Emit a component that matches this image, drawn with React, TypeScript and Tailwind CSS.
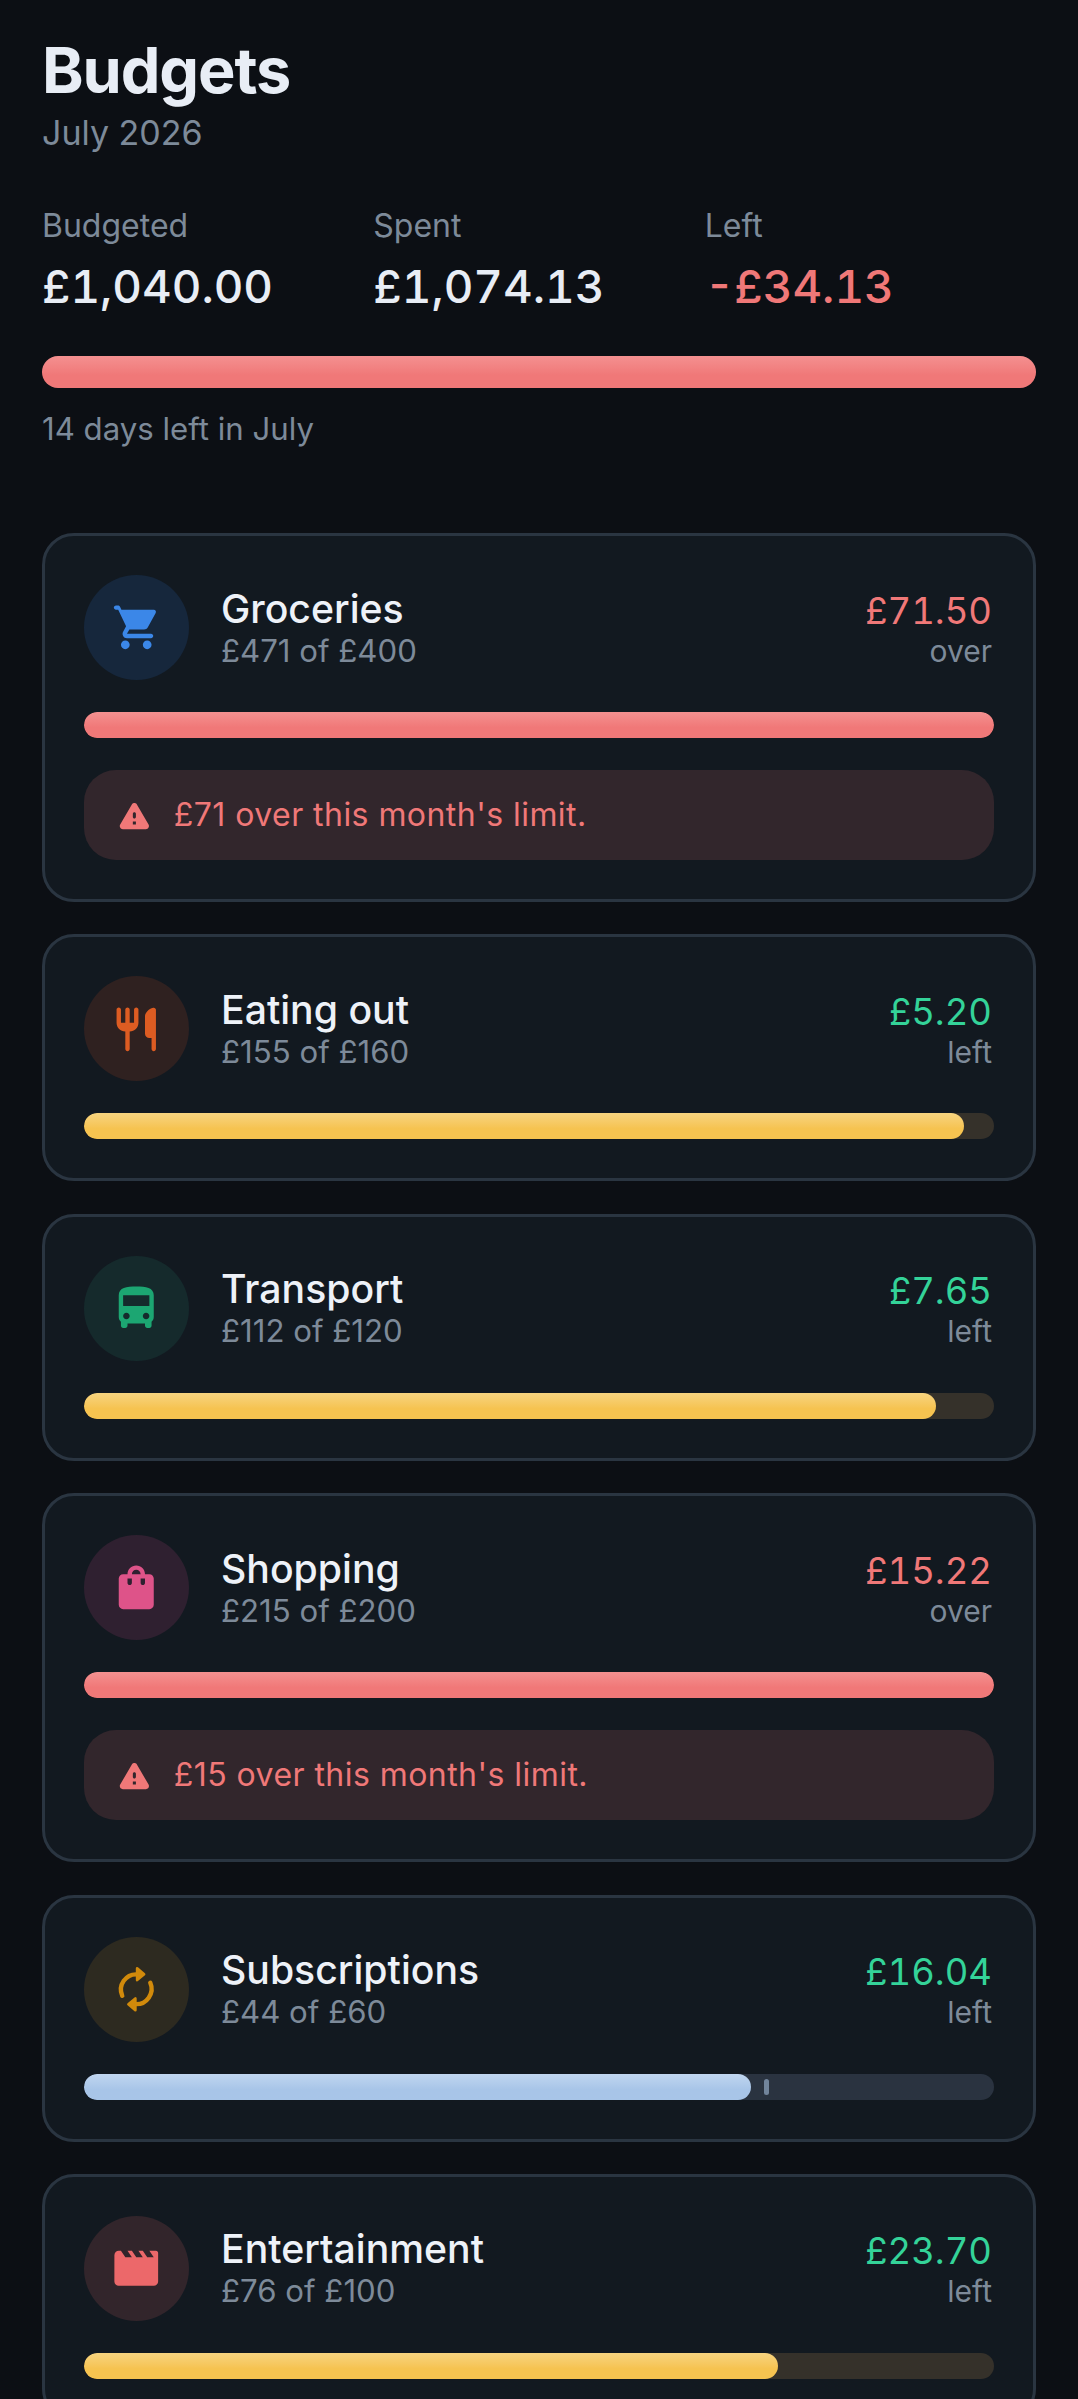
import type { ReactNode } from "react";

function Icon({ children, className }: { children: ReactNode; className: string }) {
  return (
    <svg viewBox="0 0 24 24" fill="currentColor" className={className}>
      {children}
    </svg>
  );
}

const icons: Record<string, ReactNode> = {
  cart: (
    <path d="M7 18c-1.1 0-1.99.9-1.99 2S5.9 22 7 22s2-.9 2-2-.9-2-2-2zm10 0c-1.1 0-1.99.9-1.99 2s.89 2 1.99 2 2-.9 2-2-.9-2-2-2zm-1.45-5c.75 0 1.41-.41 1.75-1.03l3.58-6.49c.37-.66-.11-1.48-.87-1.48H5.21l-.67-1.43c-.16-.35-.52-.57-.9-.57H2.75c-.55 0-1 .45-1 1s.45 1 1 1h1l3.6 7.59-1.35 2.44C5.27 15.37 6.23 17 7.75 17h11c.55 0 1-.45 1-1s-.45-1-1-1h-11l1.1-2h7.45z" />
  ),
  food: (
    <path d="M16 6v8c0 1.1.9 2 2 2h1v5c0 .55.45 1 1 1s1-.45 1-1V3.13c0-.65-.61-1.13-1.24-.98C17.6 2.68 16 4.51 16 6zm-5 3H9V3c0-.55-.45-1-1-1s-1 .45-1 1v6H5V3c0-.55-.45-1-1-1s-1 .45-1 1v6c0 2.21 1.79 4 4 4v8c0 .55.45 1 1 1s1-.45 1-1v-8c2.21 0 4-1.79 4-4V3c0-.55-.45-1-1-1s-1 .45-1 1v6z" />
  ),
  bus: (
    <path d="M4 16c0 .88.39 1.67 1 2.22V20c0 .55.45 1 1 1h1c.55 0 1-.45 1-1v-1h8v1c0 .55.45 1 1 1h1c.55 0 1-.45 1-1v-1.78c.61-.55 1-1.34 1-2.22V6c0-3.5-3.58-4-8-4s-8 .5-8 4v10zm3.5 1c-.83 0-1.5-.67-1.5-1.5S6.67 14 7.5 14s1.5.67 1.5 1.5S8.33 17 7.5 17zm9 0c-.83 0-1.5-.67-1.5-1.5s.67-1.5 1.5-1.5 1.5.67 1.5 1.5-.67 1.5-1.5 1.5zm1.5-6H6V6h12v5z" />
  ),
  bag: (
    <path d="M18 6h-2c0-2.21-1.79-4-4-4S8 3.79 8 6H6c-1.1 0-2 .9-2 2v12c0 1.1.9 2 2 2h12c1.1 0 2-.9 2-2V8c0-1.1-.9-2-2-2zm-8 4c0 .55-.45 1-1 1s-1-.45-1-1V8h2v2zm2-6c1.1 0 2 .9 2 2h-4c0-1.1.9-2 2-2zm4 6c0 .55-.45 1-1 1s-1-.45-1-1V8h2v2z" />
  ),
  sync: (
    <>
      <path d="M5.6 15A7 7 0 0 1 12.5 5.2" fill="none" stroke="currentColor" strokeWidth="2" strokeLinecap="round" />
      <path d="M12.4 2.4L15.6 5.1L12.4 7.8Z" stroke="currentColor" strokeWidth="1.2" strokeLinejoin="round" />
      <path d="M18.4 9A7 7 0 0 1 11.5 18.8" fill="none" stroke="currentColor" strokeWidth="2" strokeLinecap="round" />
      <path d="M11.6 21.6L8.4 18.9L11.6 16.2Z" stroke="currentColor" strokeWidth="1.2" strokeLinejoin="round" />
    </>
  ),
  movie: (
    <path d="M18 4l2 3h-3l-2-3h-2l2 3h-3l-2-3H8l2 3H7L5 4H4c-1.1 0-1.99.9-1.99 2L2 18c0 1.1.9 2 2 2h16c1.1 0 2-.9 2-2V5c0-.55-.45-1-1-1h-3z" />
  ),
};

const budgets = [
  { name: "Groceries", sub: "£471 of £400", amount: "£71.50", note: "over", icon: "cart", circle: "bg-[#16273c]", tint: "text-[#3b87e8]", fill: "w-full bg-gradient-to-b from-[#f49090] to-[#f07878] to-60%", track: "bg-[#3a2528]", warn: "£71 over this month's limit." },
  { name: "Eating out", sub: "£155 of £160", amount: "£5.20", note: "left", icon: "food", circle: "bg-[#2f2120]", tint: "text-[#dd5c22]", fill: "w-[96.75%] bg-gradient-to-b from-[#f7d47f] to-[#f6c350] to-60%", track: "bg-[#35312a]" },
  { name: "Transport", sub: "£112 of £120", amount: "£7.65", note: "left", icon: "bus", circle: "bg-[#152a2c]", tint: "text-[#1ca672]", fill: "w-[93.6%] bg-gradient-to-b from-[#f7d47f] to-[#f6c350] to-60%", track: "bg-[#35312a]" },
  { name: "Shopping", sub: "£215 of £200", amount: "£15.22", note: "over", icon: "bag", circle: "bg-[#2f2030]", tint: "text-[#de5389]", fill: "w-full bg-gradient-to-b from-[#f49090] to-[#f07878] to-60%", track: "bg-[#3a2528]", warn: "£15 over this month's limit." },
  { name: "Subscriptions", sub: "£44 of £60", amount: "£16.04", note: "left", icon: "sync", circle: "bg-[#2d2a20]", tint: "text-[#d18a0b]", fill: "w-[73.3%] bg-gradient-to-b from-[#c0d6f0] to-[#a8c5e8] to-60%", track: "bg-[#2a3340]", marker: true },
  { name: "Entertainment", sub: "£76 of £100", amount: "£23.70", note: "left", icon: "movie", circle: "bg-[#32252b]", tint: "text-[#ec686a]", fill: "w-[76.3%] bg-gradient-to-b from-[#f7d47f] to-[#f6c350] to-60%", track: "bg-[#35312a]" },
];

export default function App() {
  return (
    <div className="h-screen overflow-hidden bg-[#0c0f14] px-[42px] pt-[34px] font-['Inter',sans-serif] text-[#e8edf5]">
      <h1 className="text-[63px] font-bold leading-[72px] tracking-[-1.1px]">Budgets</h1>
      <p className="mt-[5px] text-[34px] leading-[44px] text-[#7d8a99]">July 2026</p>

      {/* Summary */}
      <div className="mt-[49px] grid grid-cols-3">
        {[
          { label: "Budgeted", value: "£1,040.00", color: "text-[#e8edf5]" },
          { label: "Spent", value: "£1,074.13", color: "text-[#e8edf5]" },
          { label: "Left", value: "-£34.13", color: "text-[#f07878]" },
        ].map((s) => (
          <div key={s.label}>
            <p className="text-[32px] leading-[44px] text-[#7d8a99]">{s.label}</p>
            <p className={`mt-[9px] text-[45.8px] font-[450] leading-[60px] tabular-nums ${s.color}`}>{s.value}</p>
          </div>
        ))}
      </div>

      <div className="mt-[39px] h-[32px] rounded-full bg-gradient-to-b from-[#f49090] to-[#f07878] to-60%" />
      <p className="mt-[20px] text-[31.2px] leading-[42px] text-[#7d8a99]">14 days left in July</p>

      {/* Budget cards */}
      <div className="mt-[83px] flex flex-col gap-[32.4px]">
        {budgets.map((b) => (
          <div key={b.name} className="rounded-[32px] border-[3px] border-[#2a3541] bg-[#121920] p-[39px]">
            <div className="flex items-center gap-[32px]">
              <div className={`flex h-[105px] w-[105px] shrink-0 items-center justify-center rounded-full ${b.circle}`}>
                <Icon className={`h-[52.5px] w-[52.5px] ${b.tint}`}>{icons[b.icon]}</Icon>
              </div>
              <div className="min-w-0 flex-1">
                <p className="text-[39.2px] font-medium leading-[46px] text-[#eef2f8]">{b.name}</p>
                <p className="text-[31.2px] leading-[38px] text-[#7d8a99]">{b.sub}</p>
              </div>
              <div className="pr-[2px] text-right">
                <p className={`text-[36.5px] leading-[46px] tabular-nums ${b.note === "over" ? "text-[#f07878]" : "text-[#34d399]"}`}>{b.amount}</p>
                <p className="text-[30px] leading-[34px] text-[#7d8a99]">{b.note}</p>
              </div>
            </div>

            <div className={`relative mt-[32px] h-[26px] overflow-hidden rounded-full ${b.track}`}>
              <div className={`h-full rounded-full ${b.fill}`} />
              {b.marker && <div className="absolute left-[74.7%] top-[5px] h-[16px] w-[5px] rounded-full bg-[#71849b]" />}
            </div>

            {b.warn && (
              <div className="mt-[32px] flex h-[90px] items-center gap-[21px] rounded-[32px] bg-[#32262c] px-[32px] text-[#f07878]">
                <Icon className="h-[36.75px] w-[36.75px] shrink-0">
                  <path d="M4.47 21h15.06c1.54 0 2.5-1.67 1.73-3L13.73 4.99c-.77-1.33-2.69-1.33-3.46 0L2.74 18c-.77 1.33.19 3 1.73 3zM12 14c-.55 0-1-.45-1-1v-2c0-.55.45-1 1-1s1 .45 1 1v2c0 .55-.45 1-1 1zm1 4h-2v-2h2v2z" />
                </Icon>
                <span className="text-[32px] leading-[40px] tracking-[0.45px]">{b.warn}</span>
              </div>
            )}
          </div>
        ))}
      </div>
    </div>
  );
}
